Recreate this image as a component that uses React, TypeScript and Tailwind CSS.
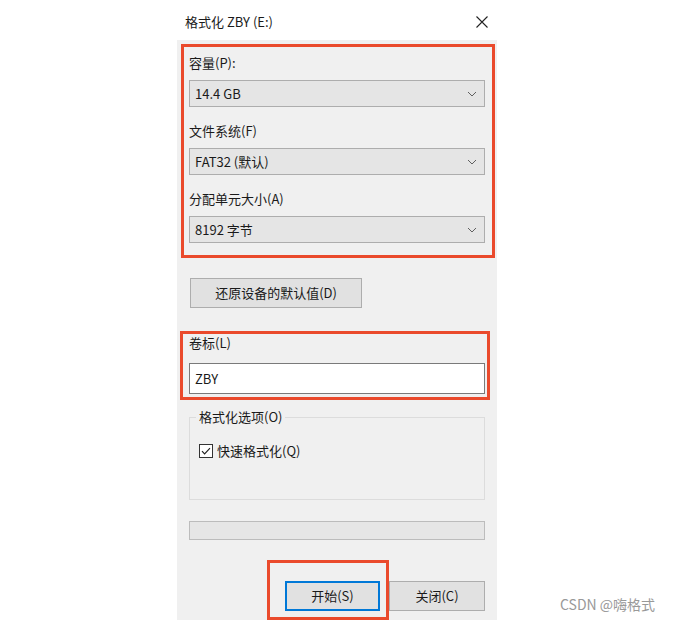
const font = { fontFamily: '"Noto Sans CJK SC", "Noto Sans", sans-serif' };

function Chevron() {
  return (
    <svg width="10" height="6" viewBox="0 0 10 6" className="text-[#606060]">
      <path d="M1 1l4 4 4-4" fill="none" stroke="currentColor" strokeWidth="1" />
    </svg>
  );
}

function Select({ value }: { value: string }) {
  return (
    <div className="flex h-[27px] items-center justify-between border border-[#adadad] bg-[#e5e5e5] pl-[5px] pr-[7px]">
      <span>{value}</span>
      <Chevron />
    </div>
  );
}

function Field({ label, value, first }: { label: string; value: string; first?: boolean }) {
  return (
    <div className={first ? "" : "mt-[15px]"}>
      <div className="h-[18px] leading-[18px]">{label}</div>
      <div className="mt-[8px]">
        <Select value={value} />
      </div>
    </div>
  );
}

export default function App() {
  return (
    <div className="flex h-[620px] w-[673px] overflow-hidden bg-white text-[13px] text-[#1a1a1a]" style={font}>
      <div className="ml-[177px] flex w-[320px] shrink-0 flex-col">
        {/* title bar */}
        <div className="flex h-10 items-center justify-between bg-white pl-[8px] pr-[9px] pt-[4px]">
          <span className="leading-[18px]">格式化 ZBY (E:)</span>
          <svg width="12" height="12" viewBox="0 0 12 12">
            <path d="M0.5 0.5l11 11M11.5 0.5l-11 11" stroke="#222" strokeWidth="1.1" />
          </svg>
        </div>

        <div className="flex flex-1 flex-col bg-[#f0f0f0] px-[12px]">
          <div className="-ml-[8px] -mr-[10px] mt-1 border-[3px] border-[#ea4a2c] pb-[12px] pl-[5px] pr-[7px] pt-[7px]">
            <Field first label="容量(P):" value="14.4 GB" />
            <Field label="文件系统(F)" value="FAT32 (默认)" />
            <Field label="分配单元大小(A)" value="8192 字节" />
          </div>

          <button className="ml-px mt-[20px] h-[30px] w-[172px] border border-[#adadad] bg-[#e1e1e1] leading-[18px]">
            还原设备的默认值(D)
          </button>

          <div className="-ml-[9px] -mr-[5px] mt-[23px] border-[3px] border-[#ea4a2c] pb-[3px] pl-[6px] pr-[2px]">
            <div className="h-[18px] leading-[18px]">卷标(L)</div>
            <div className="mt-[11px] flex h-[31px] items-center border border-[#7a7a7a] bg-white pl-[5px]">ZBY</div>
          </div>

          <div className="relative mt-[17px] h-[83px] border border-[#dcdcdc]">
            <span className="absolute -top-[10px] left-[6px] bg-[#f0f0f0] px-[3px] leading-[18px]">格式化选项(O)</span>
            <div className="ml-[9px] mt-[24px] flex items-center gap-[4px]">
              <svg width="14" height="14" viewBox="0 0 14 14">
                <rect x="0.5" y="0.5" width="13" height="13" fill="#fff" stroke="#333" />
                <path d="M3 7.2l2.6 2.6L11 4.2" fill="none" stroke="#222" strokeWidth="1.2" />
              </svg>
              <span className="leading-[18px]">快速格式化(Q)</span>
            </div>
          </div>

          <div className="mt-[21px] h-[19px] border border-[#bcbcbc] bg-[#e6e6e6]" />

          <div className="mt-[41px] flex justify-end gap-[9px]">
            <div className="relative">
              <button className="h-[30px] w-[95px] border-2 border-[#0078d7] bg-[#e1e1e1] leading-[18px]">开始(S)</button>
              <div className="absolute -bottom-[9px] -left-[18px] -right-[9px] -top-[21px] border-[3px] border-[#ea4a2c]" />
            </div>
            <button className="h-[30px] w-[96px] border border-[#adadad] bg-[#e1e1e1] leading-[18px]">关闭(C)</button>
          </div>
        </div>
      </div>

      <div className="flex flex-1 items-end pb-[7px] pl-[63px]">
        <span className="text-[14px] leading-[18px] text-[#999]">CSDN @嗨格式</span>
      </div>
    </div>
  );
}
